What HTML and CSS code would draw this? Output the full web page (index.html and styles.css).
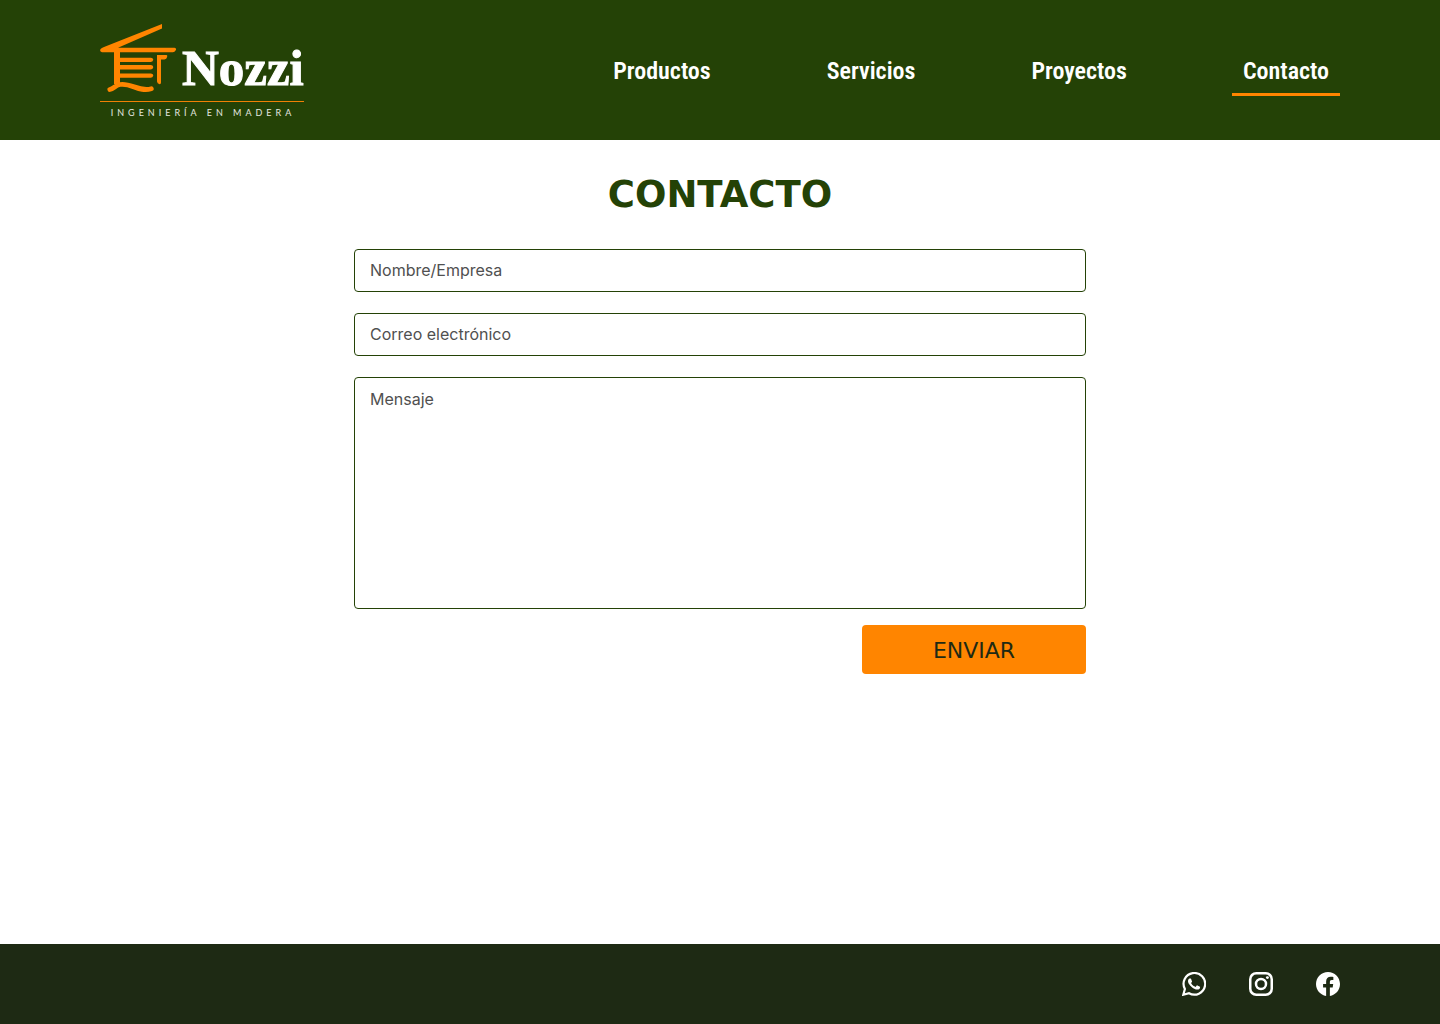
FILE: index.html
```html
<!DOCTYPE html>
<html lang="es">
<head>
<meta charset="utf-8">
<meta name="viewport" content="width=device-width, initial-scale=1">
<title>Nozzi - Contacto</title>
<link rel="stylesheet" href="styles.css">
</head>
<body>
<header class="header">
  <a class="logo" href="#" aria-label="Nozzi, ingeniería en madera">
    <svg class="logo-art" viewBox="0 0 204 96" width="204" height="96">
      <g fill="#ff8500">
        <path d="M62 2V6.500L18 25.800H74.500Q76.500 26 76 27.800Q75.200 30.200 73 30.300H2Q-.8 29.500.6 27Q1.500 26 4 25Z"/>
        <path d="M14 29H20V35.700H51Q53.500 36 53.300 37.800Q52.800 40 50.500 40H20V43H51Q53.500 43.300 53.300 45.200Q52.800 47.400 50.500 47.400H20V51.400H51Q53.500 51.700 53.300 53.500Q52.800 55.700 50.500 55.700H20V62H14Z"/>
        <path d="M57 33H66.500Q67.600 33.200 67.200 34.800Q66.600 37.400 64.500 37.400H61V60.500Q61 62.400 59.600 62.300Q57.200 61.500 57 59.500Z"/>
      </g>
      <path d="M9.800 67.500C14 66.500 15 63.500 20 62.500C31 60.500 39 70.500 51.300 66.800" fill="none" stroke="#ff8500" stroke-width="4.800" stroke-linecap="round"/>
      <path d="M0 79.500H204" stroke="#f08005" stroke-width="1"/>
      <text class="logo-name" x="82" y="63">Nozzi</text>
      <text class="logo-tagline" x="103" y="94" text-anchor="middle">INGENIERÍA EN MADERA</text>
    </svg>
  </a>
  <nav class="nav" aria-label="Principal">
    <a class="nav-link" href="#">Productos</a>
    <a class="nav-link" href="#">Servicios</a>
    <a class="nav-link" href="#">Proyectos</a>
    <a class="nav-link active" href="#" aria-current="page">Contacto</a>
  </nav>
</header>
<main class="main">
  <h1 class="title">CONTACTO</h1>
  <form class="form">
    <input class="field" type="text" aria-label="Nombre/Empresa" placeholder="Nombre/Empresa">
    <input class="field" type="email" aria-label="Correo electrónico" placeholder="Correo electrónico">
    <textarea class="field message" aria-label="Mensaje" placeholder="Mensaje"></textarea>
    <button class="submit" type="submit">ENVIAR</button>
  </form>
</main>
<footer class="footer">
  <a class="social" href="#" aria-label="WhatsApp">
    <svg viewBox="0 0 24 24" width="24" height="24" fill="#fff"><path d="M17.472 14.382c-.297-.149-1.758-.867-2.030-.967-.273-.099-.471-.148-.670.150-.197.297-.767.966-.940 1.164-.173.199-.347.223-.644.075-.297-.150-1.255-.463-2.390-1.475-.883-.788-1.480-1.761-1.653-2.059-.173-.297-.018-.458.130-.606.134-.133.298-.347.446-.520.149-.174.198-.298.298-.497.099-.198.050-.371-.025-.520-.075-.149-.669-1.612-.916-2.207-.242-.579-.487-.500-.669-.510-.173-.008-.371-.010-.570-.010-.198 0-.520.074-.792.372-.272.297-1.040 1.016-1.040 2.479 0 1.462 1.065 2.875 1.213 3.074.149.198 2.096 3.200 5.077 4.487.709.306 1.262.489 1.694.625.712.227 1.360.195 1.871.118.571-.085 1.758-.719 2.006-1.413.248-.694.248-1.289.173-1.413-.074-.124-.272-.198-.570-.347z"/><path d="M1.300 22.700L2.900 17A10.800 10.800 0 1 1 7 21.200Z" fill="none" stroke="#fff" stroke-width="2.200"/></svg>
  </a>
  <a class="social" href="#" aria-label="Instagram">
    <svg viewBox="0 0 24 24" width="24" height="24" fill="none" stroke="#fff" stroke-width="2.500"><rect x="1.250" y="1.250" width="21.500" height="21.500" rx="6"/><circle cx="12" cy="12" r="5"/><circle cx="18.400" cy="5.600" r="1.450" fill="#fff" stroke="none"/></svg>
  </a>
  <a class="social" href="#" aria-label="Facebook">
    <svg viewBox="0 0 24 24" width="24" height="24" fill="#fff"><path d="M24 12.070C24 5.400 18.630 0 12 0S0 5.400 0 12.070C0 18.100 4.390 23.100 10.130 24v-8.440H7.080v-3.490h3.050V9.410c0-3.020 1.790-4.690 4.530-4.690 1.310 0 2.690.240 2.690.240v2.970h-1.520c-1.490 0-1.960.930-1.960 1.890v2.250h3.330l-.530 3.490h-2.800V24C19.610 23.100 24 18.100 24 12.070z"/></svg>
  </a>
</footer>
</body>
</html>
```
FILE: styles.css
```css
* {
  box-sizing: border-box;
}

body {
  margin: 0;
  min-height: 100vh;
  display: flex;
  flex-direction: column;
  background: #fff;
  font-family: Inter, sans-serif;
}

.header {
  display: flex;
  align-items: center;
  justify-content: space-between;
  min-height: 140px;
  padding: 0 100px;
  background: #244206;
}

.logo,
.logo-art,
.social svg {
  display: block;
}

.logo-name {
  font: bold 51px "Liberation Serif", serif;
  fill: #fff;
  stroke: #fff;
  stroke-width: 1px;
}

.logo-tagline {
  font: 9px Lato, sans-serif;
  letter-spacing: 4px;
  fill: #e4e8e0;
}

.nav {
  display: flex;
  gap: 94px;
}

.nav-link {
  padding: 12px 11px 8px;
  border-bottom: 3px solid transparent;
  color: #fff;
  font: 600 24px/28px "Roboto Condensed", Roboto, sans-serif;
  text-decoration: none;
}

.nav-link.active {
  border-color: #ff8500;
}

.main {
  flex: 1;
  padding: 33px 24px;
}

.title {
  margin: 0 0 32px;
  color: #244206;
  font: bold 37px/44px "DejaVu Sans", sans-serif;
  text-align: center;
}

.form {
  display: flex;
  flex-direction: column;
  gap: 21px;
  max-width: 732px;
  margin: 0 auto;
}

.field {
  width: 100%;
  height: 43px;
  padding: 0 15px 2px;
  border: 1px solid #244206;
  border-radius: 4px;
  background: #fff;
  color: #244206;
  font: 16px/20px Inter, sans-serif;
}

.field::placeholder {
  color: #505050;
  opacity: 1;
}

.message {
  display: block;
  height: 232px;
  padding: 11px 15px;
  resize: none;
}

.submit {
  align-self: flex-end;
  width: 224px;
  height: 49px;
  margin-top: -5px;
  padding: 2px 0 0;
  border: 0;
  border-radius: 4px;
  background: #ff8500;
  color: #1e2a14;
  font: 22px/28px "DejaVu Sans", sans-serif;
}

.footer {
  display: flex;
  align-items: center;
  justify-content: flex-end;
  gap: 43px;
  min-height: 80px;
  padding: 0 100px;
  background: #1e2a14;
}
```
